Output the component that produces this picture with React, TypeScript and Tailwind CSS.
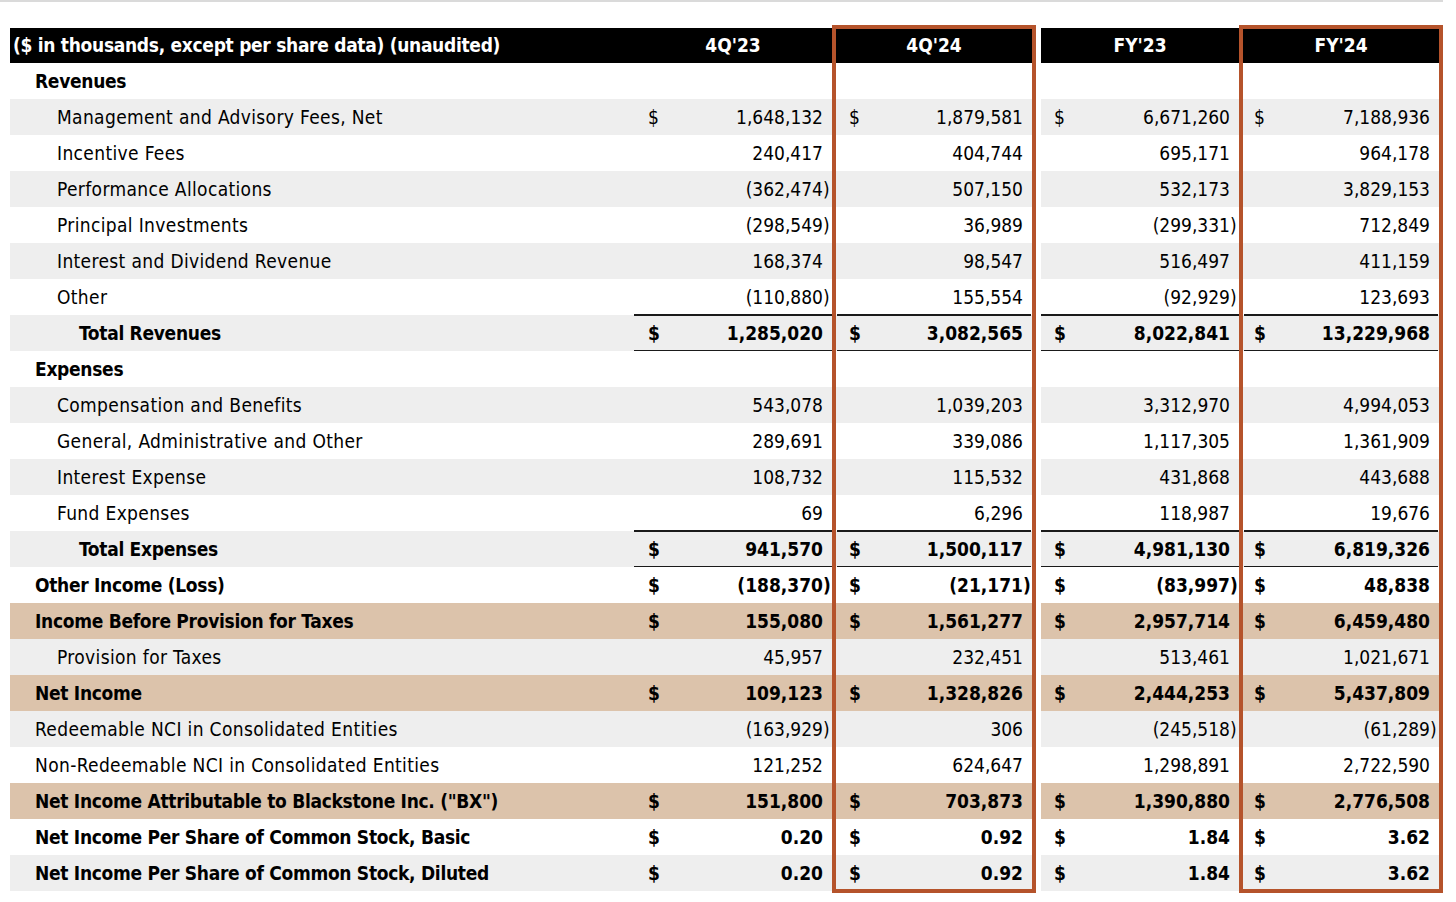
import React from "react";

type Kind = "section" | "item" | "total" | "bold" | "plain";
type Bg = "w" | "g" | "t";
interface Row {
  label: string;
  kind: Kind;
  bg: Bg;
  vals?: string[];
  dollar?: boolean;
}

const rows: Row[] = [
  { label: "Revenues", kind: "section", bg: "w" },
  { label: "Management and Advisory Fees, Net", kind: "item", bg: "g", dollar: true, vals: ["1,648,132", "1,879,581", "6,671,260", "7,188,936"] },
  { label: "Incentive Fees", kind: "item", bg: "w", vals: ["240,417", "404,744", "695,171", "964,178"] },
  { label: "Performance Allocations", kind: "item", bg: "g", vals: ["(362,474)", "507,150", "532,173", "3,829,153"] },
  { label: "Principal Investments", kind: "item", bg: "w", vals: ["(298,549)", "36,989", "(299,331)", "712,849"] },
  { label: "Interest and Dividend Revenue", kind: "item", bg: "g", vals: ["168,374", "98,547", "516,497", "411,159"] },
  { label: "Other", kind: "item", bg: "w", vals: ["(110,880)", "155,554", "(92,929)", "123,693"] },
  { label: "Total Revenues", kind: "total", bg: "g", dollar: true, vals: ["1,285,020", "3,082,565", "8,022,841", "13,229,968"] },
  { label: "Expenses", kind: "section", bg: "w" },
  { label: "Compensation and Benefits", kind: "item", bg: "g", vals: ["543,078", "1,039,203", "3,312,970", "4,994,053"] },
  { label: "General, Administrative and Other", kind: "item", bg: "w", vals: ["289,691", "339,086", "1,117,305", "1,361,909"] },
  { label: "Interest Expense", kind: "item", bg: "g", vals: ["108,732", "115,532", "431,868", "443,688"] },
  { label: "Fund Expenses", kind: "item", bg: "w", vals: ["69", "6,296", "118,987", "19,676"] },
  { label: "Total Expenses", kind: "total", bg: "g", dollar: true, vals: ["941,570", "1,500,117", "4,981,130", "6,819,326"] },
  { label: "Other Income (Loss)", kind: "bold", bg: "w", dollar: true, vals: ["(188,370)", "(21,171)", "(83,997)", "48,838"] },
  { label: "Income Before Provision for Taxes", kind: "bold", bg: "t", dollar: true, vals: ["155,080", "1,561,277", "2,957,714", "6,459,480"] },
  { label: "Provision for Taxes", kind: "item", bg: "g", vals: ["45,957", "232,451", "513,461", "1,021,671"] },
  { label: "Net Income", kind: "bold", bg: "t", dollar: true, vals: ["109,123", "1,328,826", "2,444,253", "5,437,809"] },
  { label: "Redeemable NCI in Consolidated Entities", kind: "plain", bg: "g", vals: ["(163,929)", "306", "(245,518)", "(61,289)"] },
  { label: "Non-Redeemable NCI in Consolidated Entities", kind: "plain", bg: "w", vals: ["121,252", "624,647", "1,298,891", "2,722,590"] },
  { label: "Net Income Attributable to Blackstone Inc. (\"BX\")", kind: "bold", bg: "t", dollar: true, vals: ["151,800", "703,873", "1,390,880", "2,776,508"] },
  { label: "Net Income Per Share of Common Stock, Basic", kind: "bold", bg: "w", dollar: true, vals: ["0.20", "0.92", "1.84", "3.62"] },
  { label: "Net Income Per Share of Common Stock, Diluted", kind: "bold", bg: "g", dollar: true, vals: ["0.20", "0.92", "1.84", "3.62"] },
];

const bgClass: Record<Bg, string> = {
  w: "bg-white",
  g: "bg-[#eeeeee]",
  t: "bg-[#dcc3ab]",
};

const indent: Record<Kind, string> = {
  section: "pl-[25px]",
  bold: "pl-[25px]",
  plain: "pl-[25px]",
  item: "pl-[47px]",
  total: "pl-[69px]",
};

function Num({ v }: { v: string }) {
  const neg = v.startsWith("(");
  const body = neg ? v.slice(0, -1) : v;
  return (
    <span className="flex items-center">
      <span>{body}</span>
      <span className="inline-block w-[7px] text-left">{neg ? ")" : ""}</span>
    </span>
  );
}

const cols = [
  { w: "w-[198px]", pl: "pl-[14px]", pr: "pr-[2px]", line: "mx-0" },
  { w: "w-[204px]", pl: "pl-[17px]", pr: "pr-[6px]", line: "mx-[5px]" },
  { w: "w-[198px]", pl: "pl-[13px]", pr: "pr-[2px]", line: "mx-0" },
  { w: "w-[204px]", pl: "pl-[15px]", pr: "pr-[6px]", line: "mx-[5px]" },
];

function ValueCell({ row, i }: { row: Row; i: number }) {
  const c = cols[i];
  const v = row.vals ? row.vals[i] : "";
  const isTotal = row.kind === "total";
  return (
    <div className={`${c.w} h-[36px] ${bgClass[row.bg]} relative`}>
      {isTotal && <div className={`absolute top-[-1px] left-0 right-0 h-[2px] bg-[#1a1a1a] ${c.line}`} />}
      {isTotal && <div className={`absolute bottom-[-1px] left-0 right-0 h-[2px] bg-[#1a1a1a] ${c.line}`} />}
      <div className={`h-full flex items-center justify-between pt-[1px] ${c.pl} ${c.pr}`}>
        <span>{row.dollar && v ? "$" : ""}</span>
        {v ? <Num v={v} /> : <span />}
      </div>
    </div>
  );
}

export default function App() {
  return (
    <div
      className="w-[1456px] h-[902px] bg-white text-black text-[19px] leading-none overflow-hidden"
      style={{ fontFamily: '"DejaVu Sans Condensed", "DejaVu Sans", sans-serif' }}
    >
      <div className="h-[2px] w-[1443px] bg-[#dadada]" />
      <div className="relative pl-[10px] pt-[26px]">
        <div className="flex h-[35px] text-white font-bold">
          <div className="w-[624px] bg-black flex items-center pl-[3px] tracking-[-0.3px]">
            ($ in thousands, except per share data) (unaudited)
          </div>
          <div className="w-[198px] bg-black flex items-center justify-center">4Q'23</div>
          <div className="w-[204px] bg-black flex items-center justify-center">4Q'24</div>
          <div className="w-[5px] bg-white" />
          <div className="w-[198px] bg-black flex items-center justify-center">FY'23</div>
          <div className="w-[204px] bg-black flex items-center justify-center">FY'24</div>
        </div>
        {rows.map((row, ri) => {
          const bold = row.kind === "section" || row.kind === "total" || row.kind === "bold";
          return (
            <div key={ri} className={`flex h-[36px] ${bold ? "font-bold" : ""}`}>
              <div
                className={`w-[624px] ${bgClass[row.bg]} flex items-center pt-[1px] ${indent[row.kind]} ${
                  bold ? "tracking-[-0.3px]" : "tracking-[0.35px]"
                }`}
              >
                {row.label}
              </div>
              <ValueCell row={row} i={0} />
              <ValueCell row={row} i={1} />
              <div className="w-[5px] bg-white" />
              <ValueCell row={row} i={2} />
              <ValueCell row={row} i={3} />
            </div>
          );
        })}
        <div className="absolute left-[832px] top-[23px] w-[204px] h-[868px] border-[4px] border-[#b5532b] pointer-events-none" />
        <div className="absolute left-[1239px] top-[23px] w-[204px] h-[868px] border-[4px] border-[#b5532b] pointer-events-none" />
      </div>
    </div>
  );
}
